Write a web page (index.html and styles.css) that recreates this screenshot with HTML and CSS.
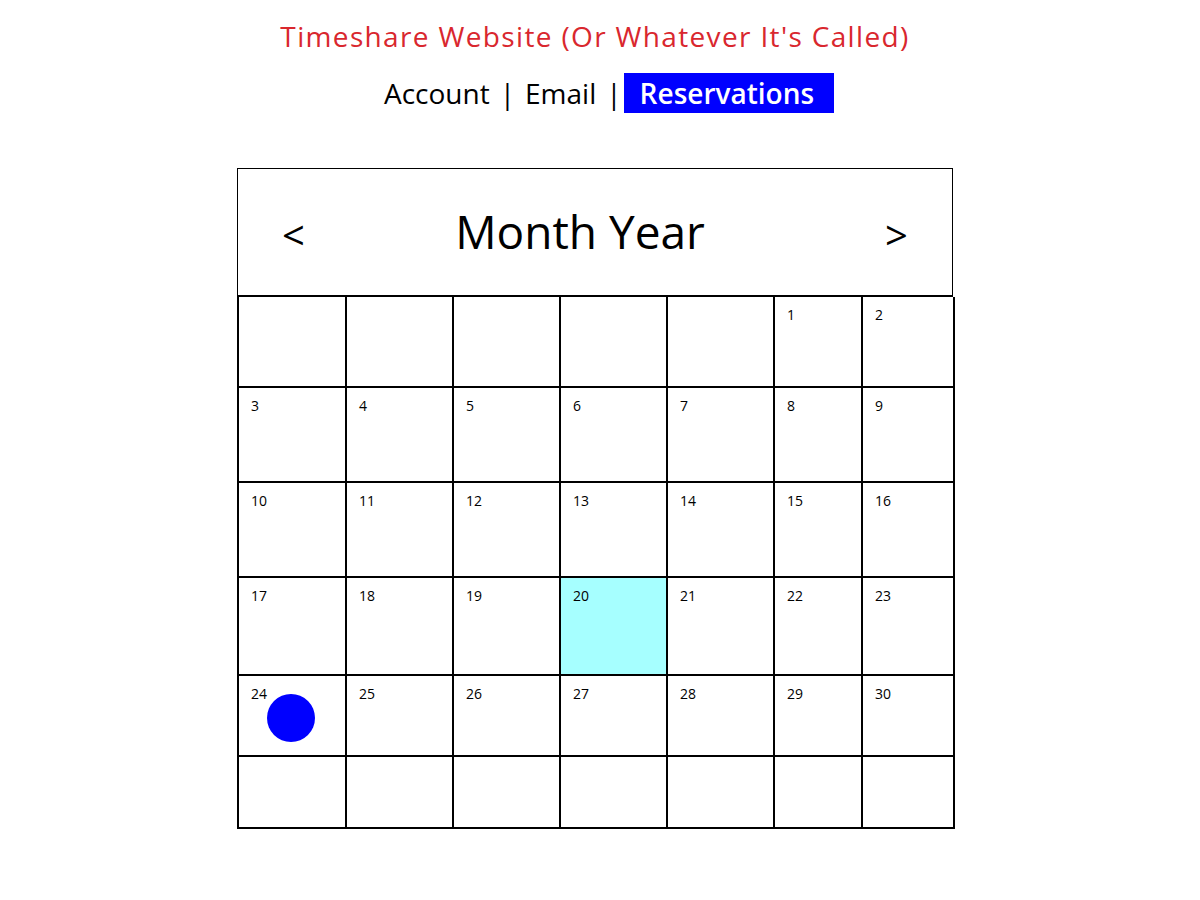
FILE: index.html
```html
<!DOCTYPE html>
<html>
<head>
<meta charset="utf-8">
<link rel="stylesheet" href="styles.css">
</head>
<body>
<header class="top">
  <h1 class="title">Timeshare Website (Or Whatever It's Called)</h1>
  <nav class="nav">
    <span class="nav-item">Account</span>
    <span class="sep">|</span>
    <span class="nav-item">Email</span>
    <span class="sep sep-last">|</span><span class="nav-item active">Reservations</span>
  </nav>
</header>
<main class="calendar">
  <div class="cal-head">
    <span class="arrow">&lt;</span>
    <span class="month">Month Year</span>
    <span class="arrow">&gt;</span>
  </div>
  <div class="grid">
    <div class="cell"></div><div class="cell"></div><div class="cell"></div><div class="cell"></div><div class="cell"></div><div class="cell"><span class="num">1</span></div><div class="cell"><span class="num">2</span></div>
    <div class="cell"><span class="num">3</span></div><div class="cell"><span class="num">4</span></div><div class="cell"><span class="num">5</span></div><div class="cell"><span class="num">6</span></div><div class="cell"><span class="num">7</span></div><div class="cell"><span class="num">8</span></div><div class="cell"><span class="num">9</span></div>
    <div class="cell"><span class="num">10</span></div><div class="cell"><span class="num">11</span></div><div class="cell"><span class="num">12</span></div><div class="cell"><span class="num">13</span></div><div class="cell"><span class="num">14</span></div><div class="cell"><span class="num">15</span></div><div class="cell"><span class="num">16</span></div>
    <div class="cell"><span class="num">17</span></div><div class="cell"><span class="num">18</span></div><div class="cell"><span class="num">19</span></div><div class="cell today"><span class="num">20</span></div><div class="cell"><span class="num">21</span></div><div class="cell"><span class="num">22</span></div><div class="cell"><span class="num">23</span></div>
    <div class="cell"><span class="num">24</span><span class="dot"></span></div><div class="cell"><span class="num">25</span></div><div class="cell"><span class="num">26</span></div><div class="cell"><span class="num">27</span></div><div class="cell"><span class="num">28</span></div><div class="cell"><span class="num">29</span></div><div class="cell"><span class="num">30</span></div>
    <div class="cell"></div><div class="cell"></div><div class="cell"></div><div class="cell"></div><div class="cell"></div><div class="cell"></div><div class="cell"></div>
  </div>
</main>
</body>
</html>
```
FILE: styles.css
```css
html, body {
  margin: 0;
  padding: 0;
  background: #ffffff;
}
body {
  font-family: "Open Sans", "Noto Sans", sans-serif;
  color: #000;
  width: 1200px;
  height: 900px;
}
.top {
  display: flex;
  flex-direction: column;
  align-items: center;
  padding-top: 17px;
}
.title {
  margin: 0;
  margin-left: -10px;
  font-weight: 400;
  font-size: 28px;
  line-height: 38px;
  color: #d9272e;
  letter-spacing: 1.35px;
}
.nav {
  margin-top: 18px;
  margin-left: 18px;
  display: flex;
  align-items: center;
  font-size: 28px;
  line-height: 40px;
}
.sep {
  margin: 0 10px;
}
.sep-last {
  margin-right: 2px;
}
.nav-item.active {
  background: #0000ff;
  color: #fff;
  padding: 0 20px 0 16px;
  font-weight: 600;
}
.calendar {
  margin-top: 55px;
  margin-left: 237px;
  width: 716px;
}
.cal-head {
  border: 1.5px solid #000;
  border-bottom: 2px solid #000;
  display: flex;
  align-items: center;
  justify-content: space-between;
  padding: 0 44px;
  box-sizing: border-box;
  height: 129px;
}
.arrow {
  font-size: 40px;
  line-height: 1;
  margin-top: 6px;
}
.month {
  font-size: 46px;
  line-height: 1;
  margin-left: -30px;
  margin-top: -2px;
}
.grid {
  display: grid;
  grid-template-columns: 108px 107px 107px 107px 107px 88px 92px;
  grid-template-rows: 91px 95px 95px 98px 81px 72px;
  border-left: 2px solid #000;
}
.cell {
  border-right: 2px solid #000;
  border-bottom: 2px solid #000;
  position: relative;
  padding: 6px 0 0 12px;
}
.today {
  background: #a6ffff;
}
.num {
  font-size: 14px;
  line-height: 16px;
  color: #000;
}
.dot {
  position: absolute;
  left: 28px;
  top: 18px;
  width: 48px;
  height: 48px;
  border-radius: 50%;
  background: #0000ff;
}
```
